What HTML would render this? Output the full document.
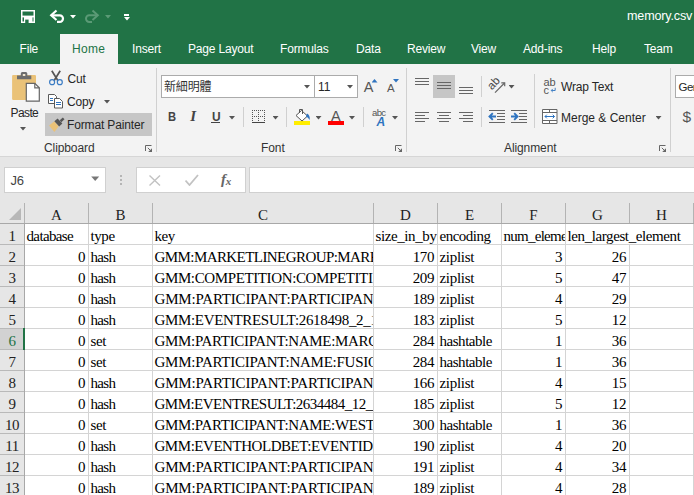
<!DOCTYPE html>
<html><head><meta charset="utf-8"><title>memory.csv</title>
<style>
html,body{margin:0;padding:0}
body{width:694px;height:495px;overflow:hidden;position:relative;background:#e6e6e6;font-family:"Liberation Sans",sans-serif;font-size:12px;color:#262626}
.abs,#top div,#top span,#top svg,#grid div{position:absolute}
#top{position:absolute;left:0;top:0;width:694px;height:204px}
#titlebar{left:0;top:0;width:694px;height:64px;background:#217346}
#hometab{left:60px;top:34px;width:58px;height:30px;background:#f3f3f3}
.tab{top:41px;height:16px;line-height:16px;color:#fff;font-size:12px;letter-spacing:-0.18px;white-space:nowrap}
#ribbon{left:0;top:64px;width:694px;height:92px;background:#f3f3f3}
#ribline{left:0;top:156px;width:694px;height:1px;background:#d6d6d6}
.t{white-space:nowrap;height:16px;line-height:16px;color:#262626;font-size:12px;letter-spacing:-0.15px}
.lbl{white-space:nowrap;height:16px;line-height:16px;color:#333;font-size:12px;letter-spacing:-0.1px}
.vs{width:1px;background:#d0d0d0}
.box{background:#fff;border:1px solid #ababab;box-sizing:border-box}
.dd{width:6px;height:3.5px;background:#555;clip-path:polygon(0 0,100% 0,50% 100%)}
.hl{background:#c6c6c6}
/* grid */
#grid{position:absolute;left:0;top:0;width:694px;height:495px;font-family:"Liberation Serif","Noto Serif CJK SC",serif;font-size:15px;color:#000;letter-spacing:-0.4px}
.ch{top:204px;height:19px;line-height:22px;text-align:center;color:#222;letter-spacing:0}
.hv{top:203px;width:1px;height:20px;background:#b3b3b3}
.hb{left:0;top:223px;width:694px;height:1px;background:#a8a8a8}
.tri{left:9px;top:208px;width:0;height:0;border-left:12px solid transparent;border-bottom:12px solid #b7b7b7}
.sheet{left:25px;top:224px;width:669px;height:271px;background:#fff}
.gv{top:224px;width:1px;height:271px;background:#d4d4d4}
.gh{left:25px;width:669px;height:1px;background:#d4d4d4}
.rhl{left:0;width:24px;height:1px;background:#b9b9b9}
.rh{left:0;width:24px;height:20px;line-height:24px;text-align:center;color:#222;letter-spacing:-0.5px}
.rh.sel{background:#d2d2d2;color:#217346}
.rhv{left:24px;top:224px;width:1px;height:271px;background:#a8a8a8}
.selbar{left:23px;top:328px;width:2px;height:22px;background:#217346}
.c{height:20px;line-height:24px;overflow:hidden;white-space:nowrap;background:#fff}
.c span{position:absolute;left:1.5px;top:0}
.c.num span{left:auto;right:3px}
</style></head><body>
<div id="top">
<div id="titlebar"></div>
<div id="hometab"></div>
<!-- QAT icons -->
<svg style="left:20px;top:9px" width="16" height="16" viewBox="0 0 16 16"><rect x="1.75" y="1.75" width="12.5" height="11.5" fill="none" stroke="#fff" stroke-width="1.5"/><rect x="1" y="6.6" width="14" height="1.8" fill="#fff"/><rect x="4" y="8" width="8.5" height="6" fill="#fff"/><rect x="5.2" y="10.6" width="3.4" height="3.4" fill="#217346"/></svg>
<svg style="left:49px;top:9px" width="16" height="16" viewBox="0 0 16 16"><path d="M2.5 6.3h8.2a3.3 3.3 0 0 1 0 6.6h-2.7" fill="none" stroke="#fff" stroke-width="2.2"/><path d="M7.5 1.5L2.2 6.3 7.5 11" fill="none" stroke="#fff" stroke-width="2.2"/></svg>
<div class="dd" style="left:70px;top:15px;background:#fff"></div>
<svg style="left:84px;top:9px" width="16" height="16" viewBox="0 0 16 16"><path d="M13.5 6.3h-8.2a3.3 3.3 0 0 0 0 6.600h2.7" fill="none" stroke="#5b9a76" stroke-width="2"/><path d="M8.5 1.5l5.3 4.8L8.5 11" fill="none" stroke="#5b9a76" stroke-width="2"/></svg>
<div class="dd" style="left:105px;top:15px;background:#5b9a76"></div>
<div style="left:124px;top:14px;width:5px;height:1.500px;background:#fff"></div>
<div class="dd" style="left:124px;top:17px;background:#fff"></div>
<div class="tab" style="left:627px;top:8px;font-size:12.6px">memory.csv</div>
<!-- tabs -->
<div class="tab" style="left:19.5px">File</div>
<div class="tab" style="left:72px;color:#217346;letter-spacing:0.3px">Home</div>
<div class="tab" style="left:132px">Insert</div>
<div class="tab" style="left:188px">Page Layout</div>
<div class="tab" style="left:280px">Formulas</div>
<div class="tab" style="left:356px">Data</div>
<div class="tab" style="left:407px">Review</div>
<div class="tab" style="left:471px">View</div>
<div class="tab" style="left:523px">Add-ins</div>
<div class="tab" style="left:592px">Help</div>
<div class="tab" style="left:644px">Team</div>
<div id="ribbon"></div>
<div id="ribline"></div>
<!-- Clipboard group -->
<svg style="left:11px;top:72px" width="30" height="30" viewBox="0 0 30 30">
<rect x="1.100" y="2.900" width="23.900" height="25.100" rx="1.200" fill="#eac278"/>
<path d="M6 7.300v-3.800h3.800v-2a1.500 1.500 0 0 1 1.500-1.500h3.500a1.500 1.500 0 0 1 1.500 1.500v2h4v3.800z" fill="#6d6d6d"/><rect x="11.800" y="2" width="2.500" height="2" fill="#f0e6d0"/>
<path d="M15.300 11.300h8.500l4.500 4.500v13.300h-13z" fill="#fff" stroke="#666" stroke-width="1.200"/><path d="M23.800 11.300v4.500h4.500" fill="none" stroke="#666" stroke-width="1.200"/>
</svg>
<div class="t" style="left:10.500px;top:105px;letter-spacing:-0.600px">Paste</div>
<div class="dd" style="left:20px;top:127px"></div>
<!-- cut -->
<svg style="left:48px;top:70px" width="16" height="16" viewBox="0 0 16 16"><path d="M3.800 0.700l6.200 10 M12.200 0.700l-6.200 10" stroke="#555" stroke-width="1.700" fill="none"/><circle cx="4.100" cy="12.200" r="2.500" fill="#f3f3f3" stroke="#3b7cc4" stroke-width="1.200"/><circle cx="11.800" cy="12.200" r="2.500" fill="#f3f3f3" stroke="#3b7cc4" stroke-width="1.200"/></svg>
<div class="t" style="left:67.500px;top:71px">Cut</div>
<!-- copy -->
<svg style="left:48px;top:93px" width="16" height="16" viewBox="0 0 16 16"><path d="M0.500 1.500h6l2 2v7h-8z" fill="#fff" stroke="#5a5a5a"/><path d="M6.500 5.500h5l3 3v6.500h-8z" fill="#fff" stroke="#5a5a5a"/><path d="M2 5.500h3M2 7.500h3M8 9.500h5M8 11.500h5" stroke="#2f74c0"/></svg>
<div class="t" style="left:67px;top:93.500px">Copy</div>
<div class="dd" style="left:104px;top:100px"></div>
<!-- format painter -->
<div class="hl" style="left:45px;top:113px;width:107px;height:23px"></div>
<svg style="left:48px;top:116.500px" width="17" height="17" viewBox="0 0 16 16"><path d="M1 8l5-4 4 5-4 5z" fill="#eac278"/><path d="M6 4l3-2.500 4.500 4.500-3 3z" fill="#555"/><path d="M11 3l3-2.500 1.500 1.500-3 3z" fill="#555"/></svg>
<div class="t" style="left:67px;top:116.500px">Format Painter</div>
<div class="lbl" style="left:44px;top:139.500px">Clipboard</div>
<svg style="left:145px;top:145px" width="8" height="8" viewBox="0 0 8 8"><path d="M0.500 6v-5.500h6" fill="none" stroke="#666"/><path d="M2.800 2.800l3 3" fill="none" stroke="#666"/><path d="M7 3.200v3.800h-3.800z" fill="#666"/></svg>
<div class="vs" style="left:156px;top:68px;height:84px"></div>
<!-- Font group -->
<div class="box" style="left:161px;top:75px;width:154px;height:23px"></div>
<div class="t" style="left:164px;top:79px;font-size:12px;font-family:'Liberation Sans','Noto Sans CJK TC',sans-serif;color:#333">新細明體</div>
<div class="dd" style="left:304px;top:85px"></div>
<div class="box" style="left:314px;top:75px;width:44px;height:23px"></div>
<div class="t" style="left:318px;top:79px">11</div>
<div class="dd" style="left:347px;top:85px"></div>
<div class="t" style="left:363.800px;top:79px;font-size:14.500px;color:#555">A</div>
<div style="left:371.500px;top:79px;width:6px;height:3.500px;background:#2f74c0;clip-path:polygon(0 100%,100% 100%,50% 0)"></div>
<div class="t" style="left:387px;top:80px;font-size:11.500px;color:#555">A</div>
<div style="left:393px;top:79px;width:6px;height:3.500px;background:#2f74c0;clip-path:polygon(0 0,100% 0,50% 100%)"></div>
<div class="t" style="left:167.500px;top:108.500px;font-weight:bold;font-size:13px;color:#444;transform:scaleX(0.86);transform-origin:0 0">B</div>
<div class="t" style="left:190.300px;top:108px;font-style:italic;font-size:15px;font-family:'Liberation Serif',serif;font-weight:bold;color:#444">I</div>
<div class="t" style="left:211.500px;top:108.500px;font-size:13px;color:#444;font-weight:bold;transform:scaleX(0.92);transform-origin:0 0">U</div>
<div style="left:211px;top:122px;width:9px;height:1px;background:#444"></div>
<div class="dd" style="left:229px;top:116px"></div>
<div class="vs" style="left:243px;top:107px;height:20px"></div>
<svg style="left:252px;top:110px" width="13" height="13" viewBox="0 0 13 13"><path d="M0 0.500h13M0 6.500h13M0.500 0v12M6.500 0v12M12.500 0v12" stroke="#555" stroke-dasharray="1 1" fill="none"/><path d="M0 12.500h13" stroke="#444"/></svg>
<div class="dd" style="left:272.500px;top:116px"></div>
<div class="vs" style="left:286px;top:107px;height:20px"></div>
<svg style="left:294px;top:108px" width="17" height="18" viewBox="0 0 17 18"><rect x="0" y="13" width="16" height="4" fill="#ffed00"/><path d="M7.500 2.500l6 5.500-5.500 5-6-5.500z" fill="#fff" stroke="#555"/><path d="M5.500 5v-3.500h3v4.500" fill="none" stroke="#555"/><path d="M13 5.500q3.300 1.500 2.700 6.500q-1.700-3-3.700-3.500z" fill="#2f74c0"/></svg>
<div class="dd" style="left:315.500px;top:116px"></div>
<div class="t" style="left:331px;top:108px;font-size:14.500px;color:#555">A</div>
<div style="left:328px;top:121px;width:16px;height:4px;background:#f00"></div>
<div class="dd" style="left:349px;top:116px"></div>
<div class="vs" style="left:363px;top:107px;height:20px"></div>
<div class="t" style="left:372px;top:104.500px;font-size:9.500px;color:#555;letter-spacing:-0.600px">abc</div>
<div class="t" style="left:376.500px;top:113.500px;font-size:12px;font-style:italic;font-weight:bold;color:#2f74c0">A</div>
<div class="dd" style="left:392px;top:116px"></div>
<div class="lbl" style="left:261px;top:139.500px">Font</div>
<svg style="left:395px;top:145px" width="8" height="8" viewBox="0 0 8 8"><path d="M0.500 6v-5.500h6" fill="none" stroke="#666"/><path d="M2.800 2.800l3 3" fill="none" stroke="#666"/><path d="M7 3.200v3.800h-3.800z" fill="#666"/></svg>
<div class="vs" style="left:406px;top:68px;height:84px"></div>
<!-- Alignment -->
<svg style="left:415px;top:75px" width="60" height="23" viewBox="0 0 60 23"><rect x="18" y="0" width="22" height="23" fill="#c6c6c6"/><path d="M0 3.500h14M0 6.500h14M0 9.500h14 M22 7.500h14M22 10.500h14M22 13.500h14 M44 12.500h14M44 15.500h14M44 18.500h14" stroke="#666" fill="none"/></svg>
<svg style="left:415px;top:111px" width="60" height="12" viewBox="0 0 60 12"><path d="M0 1.500h14M0 4.500h10M0 7.500h14M0 10.500h10 M22 1.500h14M24 4.500h10M22 7.500h14M24 10.500h10 M44 1.500h14M48 4.500h10M44 7.500h14M48 10.500h10" stroke="#666" fill="none"/></svg>
<div class="vs" style="left:481px;top:76px;height:21px"></div>
<div class="vs" style="left:481px;top:107px;height:20px"></div>
<svg style="left:488px;top:77px" width="18" height="17" viewBox="0 0 18 17"><text x="0" y="0" transform="translate(4 13.500) rotate(-47)" font-family="Liberation Sans, sans-serif" font-size="11.500" fill="#444">ab</text><path d="M7 15.600l9.500-9.600" stroke="#666" fill="none" stroke-width="1.200"/><path d="M13.300 5.800h3.400v3.400" stroke="#666" fill="none" stroke-width="1.200"/></svg>
<div class="dd" style="left:508.500px;top:85px"></div>
<svg style="left:488px;top:109px" width="40" height="14" viewBox="0 0 40 14"><path d="M1 1.500h16M9 4.500h8M9 7.500h8M9 10.500h8M1 13.500h16" stroke="#666" fill="none"/><path d="M1.500 7.500h6.500M4.800 4.200l-3.300 3.300 3.300 3.300" stroke="#2f74c0" stroke-width="1.900" fill="none"/><path d="M23 1.500h16M31 4.500h8M31 7.500h8M31 10.500h8M23 13.500h16" stroke="#666" fill="none"/><path d="M23 7.500h6.500M26.200 4.200l3.300 3.300-3.300 3.300" stroke="#2f74c0" stroke-width="1.900" fill="none"/></svg>
<div class="vs" style="left:534px;top:74px;height:54px"></div>
<div class="t" style="left:543.500px;top:74px;font-size:11px;color:#555;letter-spacing:-0.200px">ab</div>
<div class="t" style="left:543.500px;top:81.500px;font-size:11px;color:#555">c</div>
<svg style="left:550px;top:87px" width="7" height="6" viewBox="0 0 7 6"><path d="M5.200 0.800v2.700h-3.700M2.800 1.900l-1.600 1.600 1.600 1.600" fill="none" stroke="#2f74c0" stroke-width="0.900"/></svg>
<div class="t" style="left:561px;top:78.500px">Wrap Text</div>
<svg style="left:542px;top:109px" width="16" height="15" viewBox="0 0 16 15"><path d="M0.500 0.500h14.500v14h-14.500z M0.500 3.500h14.500 M0.500 11.500h14.500 M7.500 0.500v3 M7.500 11.500v3" fill="#fff" stroke="#666"/><path d="M3 7.500h9.500 M4.800 5.700l-1.800 1.800 1.800 1.800 M10.700 5.700l1.800 1.800-1.800 1.800" fill="none" stroke="#2f74c0"/></svg>
<div class="t" style="left:561px;top:109.500px;letter-spacing:0">Merge &amp; Center</div>
<div class="dd" style="left:655.500px;top:116px"></div>
<div class="lbl" style="left:504px;top:139.500px">Alignment</div>
<svg style="left:659px;top:145px" width="8" height="8" viewBox="0 0 8 8"><path d="M0.500 6v-5.500h6" fill="none" stroke="#666"/><path d="M2.800 2.800l3 3" fill="none" stroke="#666"/><path d="M7 3.200v3.800h-3.800z" fill="#666"/></svg>
<div class="vs" style="left:670px;top:68px;height:84px"></div>
<div class="box" style="left:675px;top:75px;width:30px;height:23px"></div>
<div class="t" style="left:678.500px;top:79px;letter-spacing:-0.500px;font-size:11.500px">General</div>
<div class="t" style="left:682.500px;top:109px;font-size:15.500px;color:#555">$</div>
<!-- Formula bar -->
<div class="box" style="left:4px;top:167px;width:102px;height:26px;border-color:#d0d0d0"></div>
<div class="t" style="left:10.500px;top:173px;color:#444;font-size:13px">J6</div>
<svg style="left:91px;top:176px" width="9" height="6" viewBox="0 0 9 6"><path d="M0.200 0.500h8l-4 4.500z" fill="#777"/></svg>
<div style="left:120px;top:175px;width:2px;height:2px;background:#b5b5b5"></div>
<div style="left:120px;top:179px;width:2px;height:2px;background:#b5b5b5"></div>
<div style="left:120px;top:183px;width:2px;height:2px;background:#b5b5b5"></div>
<div class="box" style="left:136px;top:167px;width:110px;height:26px;border-color:#d0d0d0"></div>
<svg style="left:149px;top:175px" width="12" height="11" viewBox="0 0 12 11"><path d="M0.500 0.500l10.500 10M11 0.500l-10.500 10" stroke="#c2c2c2" stroke-width="1.400" fill="none"/></svg>
<svg style="left:185px;top:174px" width="14" height="12" viewBox="0 0 14 12"><path d="M0.500 6.500l4 4.500 8.500-10" stroke="#c2c2c2" stroke-width="1.800" fill="none"/></svg>
<div class="t" style="left:221px;top:171px;font-family:'Liberation Serif',serif;font-style:italic;font-size:15px;color:#666;font-weight:bold;letter-spacing:-0.300px">f<span style="position:relative !important;font-size:11px;top:1px">x</span></div>
<div class="box" style="left:249px;top:167px;width:460px;height:26px;border-color:#d0d0d0"></div>
</div>
<div id="grid">
<div class="ch" style="left:25px;width:63px">A</div>
<div class="ch" style="left:89px;width:63px">B</div>
<div class="ch" style="left:153px;width:220px">C</div>
<div class="ch" style="left:374px;width:63px">D</div>
<div class="ch" style="left:438px;width:63px">E</div>
<div class="ch" style="left:502px;width:63px">F</div>
<div class="ch" style="left:566px;width:63px">G</div>
<div class="ch" style="left:630px;width:63px">H</div>
<div class="hv" style="left:24px"></div>
<div class="hv" style="left:88px"></div>
<div class="hv" style="left:152px"></div>
<div class="hv" style="left:373px"></div>
<div class="hv" style="left:437px"></div>
<div class="hv" style="left:501px"></div>
<div class="hv" style="left:565px"></div>
<div class="hv" style="left:629px"></div>
<div class="hv" style="left:693px"></div>
<div class="hb"></div>
<div class="tri"></div>
<div class="sheet"></div>
<div class="gv" style="left:88px"></div>
<div class="gv" style="left:152px"></div>
<div class="gv" style="left:373px"></div>
<div class="gv" style="left:437px"></div>
<div class="gv" style="left:501px"></div>
<div class="gv" style="left:565px"></div>
<div class="gv" style="left:629px"></div>
<div class="gv" style="left:693px"></div>
<div class="gh" style="top:244px"></div>
<div class="rhl" style="top:244px"></div>
<div class="rh" style="top:224px">1</div>
<div class="c" style="left:25px;top:224px;width:63px"><span style="letter-spacing:-0.64px">database</span></div>
<div class="c" style="left:89px;top:224px;width:63px"><span>type</span></div>
<div class="c" style="left:153px;top:224px;width:220px"><span>key</span></div>
<div class="c" style="left:374px;top:224px;width:63px"><span>size_in_by</span></div>
<div class="c" style="left:438px;top:224px;width:63px"><span style="letter-spacing:-0.5px">encoding</span></div>
<div class="c" style="left:502px;top:224px;width:63px"><span style="letter-spacing:-0.73px">num_eleme</span></div>
<div class="c" style="left:566px;top:224px;width:127px"><span>len_largest_element</span></div>
<div class="gh" style="top:265px"></div>
<div class="rhl" style="top:265px"></div>
<div class="rh" style="top:245px">2</div>
<div class="c num" style="left:25px;top:245px;width:63px"><span>0</span></div>
<div class="c" style="left:89px;top:245px;width:63px"><span style="letter-spacing:-0.7px">hash</span></div>
<div class="c" style="left:153px;top:245px;width:220px"><span style="letter-spacing:-0.57px">GMM:MARKETLINEGROUP:MARK</span></div>
<div class="c num" style="left:374px;top:245px;width:63px"><span>170</span></div>
<div class="c" style="left:438px;top:245px;width:63px"><span style="letter-spacing:-0.3px">ziplist</span></div>
<div class="c num" style="left:502px;top:245px;width:63px"><span>3</span></div>
<div class="c num" style="left:566px;top:245px;width:63px"><span>26</span></div>
<div class="gh" style="top:286px"></div>
<div class="rhl" style="top:286px"></div>
<div class="rh" style="top:266px">3</div>
<div class="c num" style="left:25px;top:266px;width:63px"><span>0</span></div>
<div class="c" style="left:89px;top:266px;width:63px"><span style="letter-spacing:-0.7px">hash</span></div>
<div class="c" style="left:153px;top:266px;width:220px"><span style="letter-spacing:-0.38px">GMM:COMPETITION:COMPETITI</span></div>
<div class="c num" style="left:374px;top:266px;width:63px"><span>209</span></div>
<div class="c" style="left:438px;top:266px;width:63px"><span style="letter-spacing:-0.3px">ziplist</span></div>
<div class="c num" style="left:502px;top:266px;width:63px"><span>5</span></div>
<div class="c num" style="left:566px;top:266px;width:63px"><span>47</span></div>
<div class="gh" style="top:307px"></div>
<div class="rhl" style="top:307px"></div>
<div class="rh" style="top:287px">4</div>
<div class="c num" style="left:25px;top:287px;width:63px"><span>0</span></div>
<div class="c" style="left:89px;top:287px;width:63px"><span style="letter-spacing:-0.7px">hash</span></div>
<div class="c" style="left:153px;top:287px;width:220px"><span style="letter-spacing:-0.18px">GMM:PARTICIPANT:PARTICIPAN</span></div>
<div class="c num" style="left:374px;top:287px;width:63px"><span>189</span></div>
<div class="c" style="left:438px;top:287px;width:63px"><span style="letter-spacing:-0.3px">ziplist</span></div>
<div class="c num" style="left:502px;top:287px;width:63px"><span>4</span></div>
<div class="c num" style="left:566px;top:287px;width:63px"><span>29</span></div>
<div class="gh" style="top:328px"></div>
<div class="rhl" style="top:328px"></div>
<div class="rh" style="top:308px">5</div>
<div class="c num" style="left:25px;top:308px;width:63px"><span>0</span></div>
<div class="c" style="left:89px;top:308px;width:63px"><span style="letter-spacing:-0.7px">hash</span></div>
<div class="c" style="left:153px;top:308px;width:220px"><span style="letter-spacing:-0.33px">GMM:EVENTRESULT:2618498_2_1</span></div>
<div class="c num" style="left:374px;top:308px;width:63px"><span>183</span></div>
<div class="c" style="left:438px;top:308px;width:63px"><span style="letter-spacing:-0.3px">ziplist</span></div>
<div class="c num" style="left:502px;top:308px;width:63px"><span>5</span></div>
<div class="c num" style="left:566px;top:308px;width:63px"><span>12</span></div>
<div class="gh" style="top:349px"></div>
<div class="rhl" style="top:349px"></div>
<div class="rh sel" style="top:329px">6</div>
<div class="c num" style="left:25px;top:329px;width:63px"><span>0</span></div>
<div class="c" style="left:89px;top:329px;width:63px"><span>set</span></div>
<div class="c" style="left:153px;top:329px;width:220px"><span style="letter-spacing:-0.32px">GMM:PARTICIPANT:NAME:MARG</span></div>
<div class="c num" style="left:374px;top:329px;width:63px"><span>284</span></div>
<div class="c" style="left:438px;top:329px;width:63px"><span style="letter-spacing:-0.46px">hashtable</span></div>
<div class="c num" style="left:502px;top:329px;width:63px"><span>1</span></div>
<div class="c num" style="left:566px;top:329px;width:63px"><span>36</span></div>
<div class="gh" style="top:370px"></div>
<div class="rhl" style="top:370px"></div>
<div class="rh" style="top:350px">7</div>
<div class="c num" style="left:25px;top:350px;width:63px"><span>0</span></div>
<div class="c" style="left:89px;top:350px;width:63px"><span>set</span></div>
<div class="c" style="left:153px;top:350px;width:220px"><span style="letter-spacing:-0.25px">GMM:PARTICIPANT:NAME:FUSIO</span></div>
<div class="c num" style="left:374px;top:350px;width:63px"><span>284</span></div>
<div class="c" style="left:438px;top:350px;width:63px"><span style="letter-spacing:-0.46px">hashtable</span></div>
<div class="c num" style="left:502px;top:350px;width:63px"><span>1</span></div>
<div class="c num" style="left:566px;top:350px;width:63px"><span>36</span></div>
<div class="gh" style="top:391px"></div>
<div class="rhl" style="top:391px"></div>
<div class="rh" style="top:371px">8</div>
<div class="c num" style="left:25px;top:371px;width:63px"><span>0</span></div>
<div class="c" style="left:89px;top:371px;width:63px"><span style="letter-spacing:-0.7px">hash</span></div>
<div class="c" style="left:153px;top:371px;width:220px"><span style="letter-spacing:-0.18px">GMM:PARTICIPANT:PARTICIPAN</span></div>
<div class="c num" style="left:374px;top:371px;width:63px"><span>166</span></div>
<div class="c" style="left:438px;top:371px;width:63px"><span style="letter-spacing:-0.3px">ziplist</span></div>
<div class="c num" style="left:502px;top:371px;width:63px"><span>4</span></div>
<div class="c num" style="left:566px;top:371px;width:63px"><span>15</span></div>
<div class="gh" style="top:412px"></div>
<div class="rhl" style="top:412px"></div>
<div class="rh" style="top:392px">9</div>
<div class="c num" style="left:25px;top:392px;width:63px"><span>0</span></div>
<div class="c" style="left:89px;top:392px;width:63px"><span style="letter-spacing:-0.7px">hash</span></div>
<div class="c" style="left:153px;top:392px;width:220px"><span style="letter-spacing:-0.515px">GMM:EVENTRESULT:2634484_12_</span></div>
<div class="c num" style="left:374px;top:392px;width:63px"><span>185</span></div>
<div class="c" style="left:438px;top:392px;width:63px"><span style="letter-spacing:-0.3px">ziplist</span></div>
<div class="c num" style="left:502px;top:392px;width:63px"><span>5</span></div>
<div class="c num" style="left:566px;top:392px;width:63px"><span>12</span></div>
<div class="gh" style="top:433px"></div>
<div class="rhl" style="top:433px"></div>
<div class="rh" style="top:413px">10</div>
<div class="c num" style="left:25px;top:413px;width:63px"><span>0</span></div>
<div class="c" style="left:89px;top:413px;width:63px"><span>set</span></div>
<div class="c" style="left:153px;top:413px;width:220px"><span style="letter-spacing:-0.325px">GMM:PARTICIPANT:NAME:WEST</span></div>
<div class="c num" style="left:374px;top:413px;width:63px"><span>300</span></div>
<div class="c" style="left:438px;top:413px;width:63px"><span style="letter-spacing:-0.46px">hashtable</span></div>
<div class="c num" style="left:502px;top:413px;width:63px"><span>1</span></div>
<div class="c num" style="left:566px;top:413px;width:63px"><span>36</span></div>
<div class="gh" style="top:454px"></div>
<div class="rhl" style="top:454px"></div>
<div class="rh" style="top:434px">11</div>
<div class="c num" style="left:25px;top:434px;width:63px"><span>0</span></div>
<div class="c" style="left:89px;top:434px;width:63px"><span style="letter-spacing:-0.7px">hash</span></div>
<div class="c" style="left:153px;top:434px;width:220px"><span style="letter-spacing:-0.46px">GMM:EVENTHOLDBET:EVENTID</span></div>
<div class="c num" style="left:374px;top:434px;width:63px"><span>190</span></div>
<div class="c" style="left:438px;top:434px;width:63px"><span style="letter-spacing:-0.3px">ziplist</span></div>
<div class="c num" style="left:502px;top:434px;width:63px"><span>4</span></div>
<div class="c num" style="left:566px;top:434px;width:63px"><span>20</span></div>
<div class="gh" style="top:475px"></div>
<div class="rhl" style="top:475px"></div>
<div class="rh" style="top:455px">12</div>
<div class="c num" style="left:25px;top:455px;width:63px"><span>0</span></div>
<div class="c" style="left:89px;top:455px;width:63px"><span style="letter-spacing:-0.7px">hash</span></div>
<div class="c" style="left:153px;top:455px;width:220px"><span style="letter-spacing:-0.18px">GMM:PARTICIPANT:PARTICIPAN</span></div>
<div class="c num" style="left:374px;top:455px;width:63px"><span>191</span></div>
<div class="c" style="left:438px;top:455px;width:63px"><span style="letter-spacing:-0.3px">ziplist</span></div>
<div class="c num" style="left:502px;top:455px;width:63px"><span>4</span></div>
<div class="c num" style="left:566px;top:455px;width:63px"><span>34</span></div>
<div class="gh" style="top:496px"></div>
<div class="rhl" style="top:496px"></div>
<div class="rh" style="top:476px">13</div>
<div class="c num" style="left:25px;top:476px;width:63px"><span>0</span></div>
<div class="c" style="left:89px;top:476px;width:63px"><span style="letter-spacing:-0.7px">hash</span></div>
<div class="c" style="left:153px;top:476px;width:220px"><span style="letter-spacing:-0.18px">GMM:PARTICIPANT:PARTICIPAN</span></div>
<div class="c num" style="left:374px;top:476px;width:63px"><span>189</span></div>
<div class="c" style="left:438px;top:476px;width:63px"><span style="letter-spacing:-0.3px">ziplist</span></div>
<div class="c num" style="left:502px;top:476px;width:63px"><span>4</span></div>
<div class="c num" style="left:566px;top:476px;width:63px"><span>28</span></div>
<div class="rhv"></div>
<div class="selbar"></div>
</div>
</body></html>
